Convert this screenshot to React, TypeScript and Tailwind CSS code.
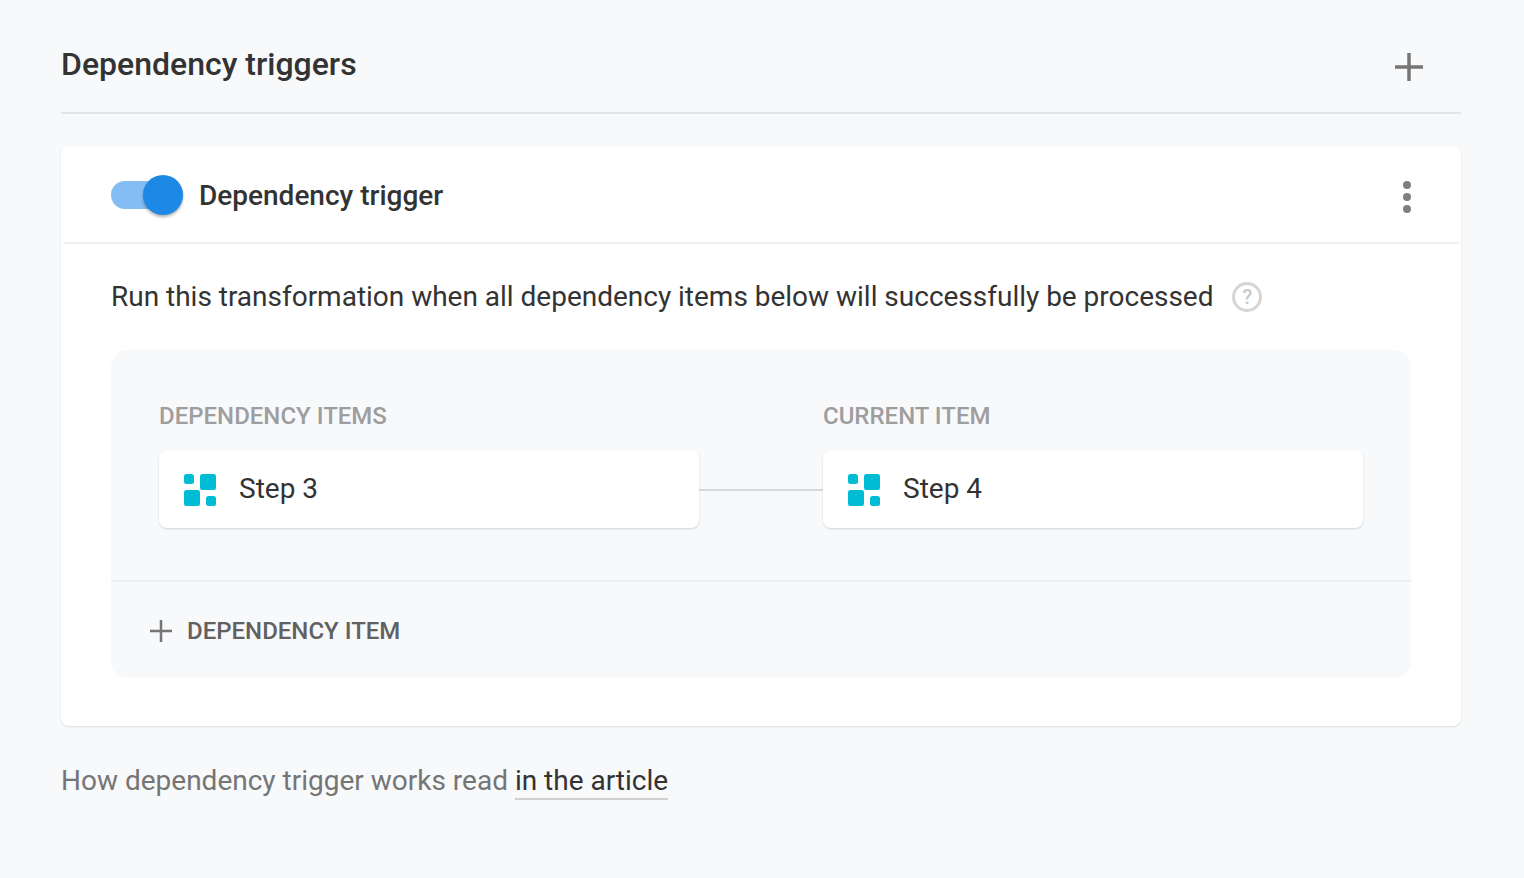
function Tile() {
  return (
    <svg width="32" height="32" viewBox="0 0 32 32" className="shrink-0">
      <rect x="0" y="0" width="10" height="10" rx="2.5" fill="#00bcd4" />
      <rect x="16" y="0" width="16" height="16" rx="2.5" fill="#00bcd4" />
      <rect x="0" y="16" width="16" height="16" rx="2.5" fill="#00bcd4" />
      <rect x="22" y="22" width="10" height="10" rx="2.5" fill="#00bcd4" />
    </svg>
  )
}

function StepCard({ label }: { label: string }) {
  return (
    <div className="flex h-[78px] w-[540px] items-center rounded-lg bg-white pl-[25px] pt-[2px] shadow-[0_1px_2px_rgba(0,0,0,0.15)]">
      <Tile />
      <span className="mb-[2px] ml-[23px] text-[28px] text-[#333]">{label}</span>
    </div>
  )
}

export default function App() {
  return (
    <div className="min-h-[878px] w-[1524px] bg-[#f8f9fb] pl-[61px] pr-[63px] font-['Roboto',sans-serif]">
      <div className="flex h-[114px] items-center justify-between border-b-2 border-[#e2e4e8] pb-[2px] pt-[18px]">
        <h1 className="text-[32px] font-medium text-[#333]">Dependency triggers</h1>
        <svg width="30" height="30" viewBox="0 0 30 30" className="mr-[37px] mt-[6px]">
          <path d="M15 1v28M1 15h28" stroke="#757575" strokeWidth="3.5" />
        </svg>
      </div>

      <div className="mt-[32px] rounded-lg bg-white shadow-[0_1px_2px_rgba(0,0,0,0.12)]">
        <div className="mx-[2px] flex h-[98px] items-center justify-between border-b-2 border-[#eeeff2] pl-[48px] pr-[48px] pt-[2px]">
          <div className="flex items-center">
            <div className="relative h-7 w-[72px] rounded-full bg-[#84bdf3]">
              <div className="absolute -top-[6px] right-0 h-10 w-10 rounded-full bg-[#1e88e5] shadow-[0_2px_3px_rgba(0,0,0,0.3)]" />
            </div>
            <span className="ml-4 mt-[2px] text-[28px] font-medium text-[#333]">Dependency trigger</span>
          </div>
          <div className="mt-[4px] flex flex-col gap-[4px]">
            <div className="h-2 w-2 rounded-full bg-[#7f7f7f]" />
            <div className="h-2 w-2 rounded-full bg-[#7f7f7f]" />
            <div className="h-2 w-2 rounded-full bg-[#7f7f7f]" />
          </div>
        </div>

        <div className="px-[50px] pb-[48px]">
          <div className="flex h-[106px] items-center">
            <span className="text-[28px] tracking-[-0.012px] text-[#333]">Run this transformation when all dependency items below will successfully be processed</span>
            <span className="ml-[19px] flex h-[30px] w-[30px] items-center justify-center rounded-full border-[3px] border-[#d5d5d5] text-[20px] font-medium text-[#c8c8c8]">?</span>
          </div>

          <div className="rounded-2xl bg-[#f8f9fb]">
            <div className="h-[232px] border-b-2 border-[#eeeff2] px-[48px] pt-[48px]">
              <div className="flex">
                <div className="w-[664px] text-[24px] font-medium text-[#9e9e9e]">DEPENDENCY ITEMS</div>
                <div className="text-[24px] font-medium text-[#9e9e9e]">CURRENT ITEM</div>
              </div>
              <div className="mt-[16px] flex items-center">
                <StepCard label="Step 3" />
                <div className="mt-[2px] h-[2px] w-[124px] bg-[#d5d8dc]" />
                <StepCard label="Step 4" />
              </div>
            </div>
            <div className="flex h-[96px] items-center pl-[38px] pt-[1px]">
              <svg width="24" height="24" viewBox="0 0 24 24">
                <path d="M12 1v22M1 12h22" stroke="#757575" strokeWidth="2.5" />
              </svg>
              <span className="ml-[14px] text-[24px] font-medium text-[#616161]">DEPENDENCY ITEM</span>
            </div>
          </div>
        </div>
      </div>

      <div className="mt-[34px] text-[28px] text-[#757575]">
        How dependency trigger works read <span className="border-b-2 border-[#d0d0d0] pb-[1px] text-[#333]">in the article</span>
      </div>
    </div>
  )
}
